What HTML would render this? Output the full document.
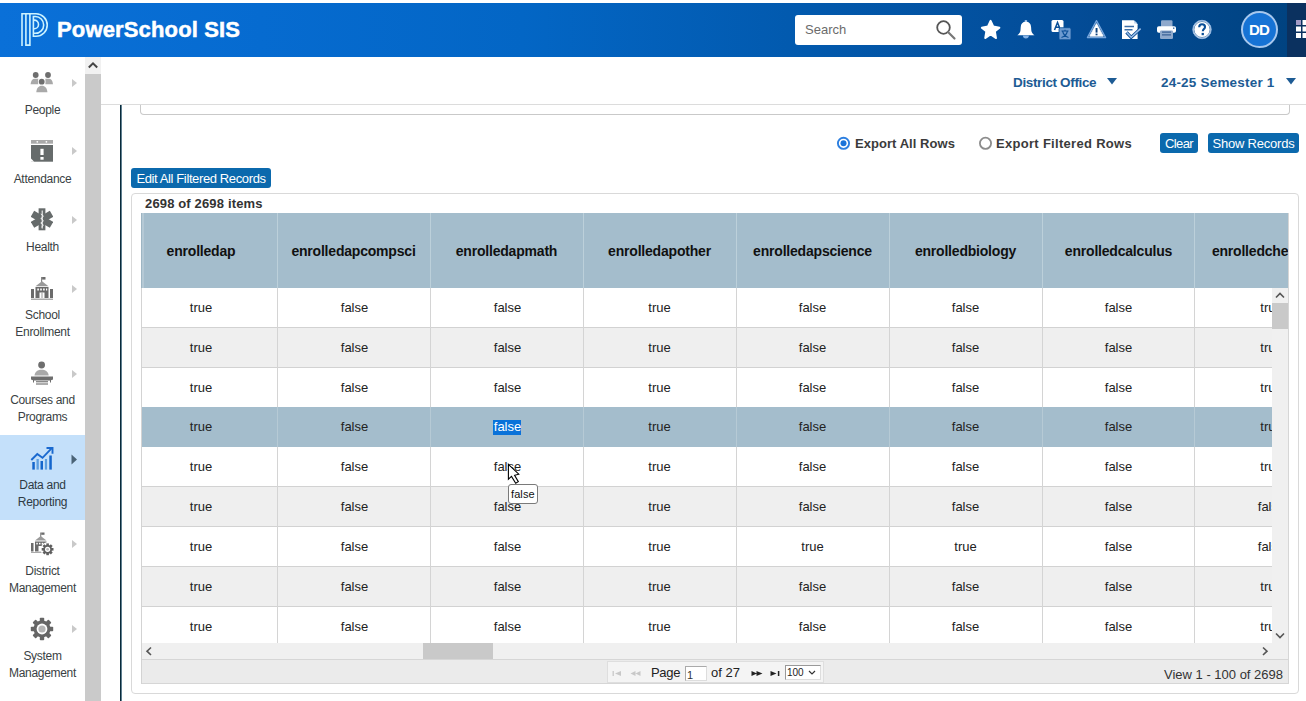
<!DOCTYPE html>
<html><head><meta charset="utf-8">
<style>
*{box-sizing:border-box;margin:0;padding:0}
html,body{width:1306px;height:701px;overflow:hidden;background:#fff;font-family:"Liberation Sans",sans-serif;color:#333}
.a{position:absolute}
.t{position:absolute;white-space:nowrap}
#hdr{left:0;top:3px;width:1306px;height:54px;background:linear-gradient(90deg,#0a70d8 0%,#066bd0 20%,#0366c5 40%,#0259ad 62%,#034c97 82%,#00427f 100%)}
#hdrR{left:1287px;top:3px;width:19px;height:54px;background:#0b315f}
.nav{left:0;width:85px;text-align:center;font-size:12px;letter-spacing:-0.3px;color:#3a3f44;line-height:17px}
.chev{width:0;height:0;border-top:4.5px solid transparent;border-bottom:4.5px solid transparent;border-left:5px solid #c9c9c9}
.btn{background:#0b69ad;color:#fff;border-radius:3px;font-size:13px;text-align:center;padding-top:1px}
.col{top:213px;height:430px;border-right:1px solid #d4d4d4}
.hd{font-size:14px;font-weight:bold;color:#111;text-align:center;line-height:16px;letter-spacing:-0.2px}
.cell{font-size:13px;color:#222;text-align:center;line-height:16px}
</style></head><body>
<!-- header -->
<div id="hdr" class="a"></div>
<div id="hdrR" class="a"></div>
<svg class="a" style="left:15px;top:8px" width="40" height="42" viewBox="15 8 40 42">
  <g fill="none" stroke="#cdf3ff" stroke-width="1.6" stroke-linejoin="miter">
    <path d="M22 46 V13.8 H36 A11.25 11.25 0 0 1 36 36.3 H33.4 V16.5 H35.3 A8.4 8.4 0 0 1 35.3 33.3 H33.4"/>
    <path d="M25.9 13.8 V45.1 H29.9 V13.8"/>
    <path d="M33.4 20.1 H34.2 A4.3 4.3 0 0 1 34.2 28.7 H33.4"/>
  </g>
</svg>
<div class="t" style="left:57px;top:19px;font-size:22px;line-height:22px;font-weight:bold;color:#fff;letter-spacing:0.15px;-webkit-text-stroke:0.5px #fff">PowerSchool SIS</div>

<div class="a" style="left:795px;top:15px;width:167px;height:30px;background:#fff;border-radius:3px"></div>
<div class="t" style="left:805px;top:22px;font-size:13px;line-height:16px;color:#6b6b6b">Search</div>
<svg class="a" style="left:935px;top:19px" width="22" height="22" viewBox="0 0 22 22">
  <circle cx="8.5" cy="8.5" r="6.3" fill="none" stroke="#555" stroke-width="1.8"/>
  <line x1="13" y1="13" x2="19.5" y2="19.5" stroke="#777" stroke-width="2.2" stroke-linecap="round"/>
</svg>

<!-- header icons -->
<svg class="a" style="left:976px;top:16px" width="30" height="28" viewBox="976 16 30 28"><path d="M990.60 20.70 L993.30 26.28 L999.44 27.73 L994.97 31.42 L996.07 38.12 L990.60 34.60 L985.13 38.12 L986.23 31.42 L981.76 27.73 L987.90 26.28 Z" fill="#fff" stroke="#fff" stroke-width="1.8" stroke-linejoin="round"/></svg>
<svg class="a" style="left:1014px;top:17px" width="24" height="24" viewBox="1014 17 24 24">
  <ellipse cx="1025.9" cy="21.1" rx="1.4" ry="1.2" fill="#a3c6ee"/>
  <path d="M1025.9 21.8 C1022.6 21.8 1020.9 23.8 1020.7 27.2 L1020.5 30.3 C1020.3 32.4 1019.2 33.8 1017.3 35.3 H1034.5 C1032.6 33.8 1031.5 32.4 1031.3 30.3 L1031.1 27.2 C1030.9 23.8 1029.2 21.8 1025.9 21.8 Z" fill="#fff"/>
  <path d="M1022.9 35.6 H1028.9 C1028.9 37.4 1027.7 38.5 1025.9 38.5 C1024.1 38.5 1022.9 37.4 1022.9 35.6 Z" fill="#86b3e6"/>
</svg>
<svg class="a" style="left:1050px;top:19px" width="22" height="22" viewBox="0 0 22 22">
  <rect x="1.5" y="1" width="12" height="12" rx="1.5" fill="#fff"/>
  <path d="M4.5 11 L7.5 3.5 L10.5 11 M5.7 8.3 H9.3" stroke="#0a4f97" stroke-width="1.5" fill="none"/>
  <rect x="9" y="8.7" width="12" height="12" rx="1.5" fill="#6c9ad0" stroke="#0a4f97" stroke-width="0.8"/>
  <path d="M11.5 12 H18.5 M15 10.8 V12 M12.5 12 C13.5 16 15.5 17.5 18.5 18.5 M17.5 12 C16.5 16 14.5 17.5 11.5 18.5" stroke="#0a4f97" stroke-width="1.1" fill="none"/>
</svg>
<svg class="a" style="left:1084px;top:17px" width="26" height="25" viewBox="1084 17 26 25">
  <path d="M1096.5 20.6 L1105.6 37.6 H1087.4 Z" fill="none" stroke="#78a6dc" stroke-width="1.3" stroke-linejoin="round"/>
  <path d="M1096.5 23.6 L1103.3 36.2 H1089.7 Z" fill="#fff" stroke="#fff" stroke-width="0.8" stroke-linejoin="round"/>
  <rect x="1095.6" y="28" width="1.9" height="4.6" fill="#0a3f7a"/>
  <rect x="1095.6" y="33.6" width="1.9" height="1.7" fill="#0a3f7a"/>
</svg>
<svg class="a" style="left:1120px;top:18px" width="24" height="23" viewBox="1120 18 24 23">
  <path d="M1122 20.2 H1133.6 L1137.6 24.2 V39 H1122 Z" fill="#fff"/>
  <path d="M1134.2 20.2 L1137.6 23.6 H1134.2 Z" fill="#bcd3ee"/>
  <path d="M1124.5 26.5 H1134 M1124.5 29.8 H1132.5" stroke="#3d6ea6" stroke-width="1.5"/>
  <path d="M1126.5 32.3 L1131.2 37.3 L1140.6 28.6" stroke="#0a4a90" stroke-width="3.2" fill="none"/>
  <path d="M1126.5 32.3 L1131.2 37.3 L1140.6 28.6" stroke="#9ec1ea" stroke-width="1.5" fill="none"/>
</svg>
<svg class="a" style="left:1155px;top:18px" width="24" height="23" viewBox="1155 18 24 23">
  <rect x="1161" y="20.2" width="11.5" height="7" rx="1.2" fill="#8fa9cc"/>
  <rect x="1157" y="26.2" width="19" height="6.6" rx="1.8" fill="#fff"/>
  <rect x="1173" y="27.6" width="1.4" height="1.1" fill="#0a4a90"/>
  <rect x="1160" y="30.4" width="13" height="8.6" rx="1.2" fill="#8fa9cc"/>
  <path d="M1162 32.2 H1171 M1162 34.8 H1171" stroke="#3d6397" stroke-width="1.2"/>
</svg>
<svg class="a" style="left:1191px;top:19px" width="22" height="22" viewBox="0 0 22 22">
  <circle cx="11" cy="10.5" r="9.2" fill="#fff" stroke="#8fb4e0" stroke-width="1"/>
  <circle cx="11" cy="10.5" r="8" fill="#fff" stroke="#0a4f97" stroke-width="0.6"/>
  <path d="M8.2 8.2 C8.2 6.2 9.5 5.2 11 5.2 C12.8 5.2 14 6.2 14 7.9 C14 10 11.8 10.2 11.8 12.3" stroke="#0a4f97" stroke-width="2.1" fill="none"/>
  <rect x="10.6" y="13.9" width="2.3" height="2.3" fill="#0a4f97"/>
</svg>
<div class="a" style="left:1241px;top:11px;width:37px;height:37px;border-radius:50%;background:#1673d5;border:2px solid #a7c8ee"></div>
<div class="t" style="left:1241px;top:21px;width:37px;text-align:center;font-size:15px;line-height:17px;font-weight:bold;color:#fff;letter-spacing:-0.8px;text-indent:-0.8px">DD</div>
<svg class="a" style="left:1296px;top:20px" width="10" height="19" viewBox="0 0 10 19">
  <rect x="0" y="0" width="5" height="5" fill="#a39ac4"/>
  <rect x="6.5" y="0" width="5" height="5" fill="#fff"/>
  <rect x="0" y="6.5" width="5" height="5" fill="#fff"/>
  <rect x="6.5" y="6.5" width="5" height="5" fill="#fff"/>
  <rect x="0" y="13" width="5" height="5" fill="#fff"/>
  <rect x="6.5" y="13" width="5" height="5" fill="#fff"/>
</svg>

<!-- sub header -->
<div class="a" style="left:101px;top:104px;width:1205px;height:1px;background:#dcdcdc"></div>
<div class="t" style="left:1013px;top:75px;font-size:13.5px;line-height:16px;font-weight:bold;color:#1d5b94;letter-spacing:-0.35px">District Office</div>
<svg class="a" style="left:1107px;top:78px" width="10" height="7" viewBox="0 0 10 7"><path d="M0 0 H10 L5 6.5 Z" fill="#1d5b94"/></svg>
<div class="t" style="left:1161px;top:75px;font-size:13.5px;line-height:16px;font-weight:bold;color:#1d5b94;letter-spacing:0.2px">24-25 Semester 1</div>
<svg class="a" style="left:1286px;top:78px" width="10" height="7" viewBox="0 0 10 7"><path d="M0 0 H10 L5 6.5 Z" fill="#1d5b94"/></svg>

<!-- left teal line and top box -->
<div class="a" style="left:120px;top:105px;width:1px;height:596px;background:#082a3a"></div><div class="a" style="left:121px;top:105px;width:1px;height:596px;background:#5f7f90"></div>
<div class="a" style="left:140px;top:104px;width:1150px;height:11px;border:1px solid #c9c9c9;border-top:none;border-radius:0 0 4px 4px"></div>
<div class="a" style="left:101px;top:104px;width:1205px;height:1px;background:#dcdcdc"></div>



<!-- export row -->
<svg class="a" style="left:836px;top:136px" width="15" height="15" viewBox="0 0 15 15"><circle cx="7.5" cy="7.3" r="5.6" fill="#fff" stroke="#2c7fe0" stroke-width="1.9"/><circle cx="7.5" cy="7.3" r="3" fill="#1a73d9"/></svg>
<div class="t" style="left:855px;top:136px;font-size:13px;line-height:16px;font-weight:bold;color:#3b3b3b;letter-spacing:0.05px">Export All Rows</div>
<svg class="a" style="left:978px;top:136px" width="15" height="15" viewBox="0 0 15 15"><circle cx="7.5" cy="7.3" r="5.6" fill="#fff" stroke="#8c8c8c" stroke-width="1.8"/></svg>
<div class="t" style="left:996px;top:136px;font-size:13px;line-height:16px;font-weight:bold;color:#3b3b3b;letter-spacing:0.3px">Export Filtered Rows</div>
<div class="a btn" style="left:1160px;top:133px;width:38px;height:20px;line-height:20px;letter-spacing:-0.6px">Clear</div>
<div class="a btn" style="left:1208px;top:133px;width:91px;height:20px;line-height:20px;letter-spacing:-0.2px">Show Records</div>

<div class="a btn" style="left:131px;top:168px;width:140px;height:20px;line-height:20px;letter-spacing:-0.38px">Edit All Filtered Records</div>

<!-- grid box -->
<div class="a" style="left:131px;top:193px;width:1168px;height:501px;border:1px solid #d9d9d9;border-radius:4px;background:#fff"></div>
<div class="t" style="left:145px;top:196px;font-size:13px;line-height:16px;font-weight:bold;color:#333;letter-spacing:0.15px">2698 of 2698 items</div>
<div class="a" style="left:141px;top:213px;width:1148px;height:471px;overflow:hidden;border-left:1px solid #d3d3d3;border-right:1px solid #d6d6d6">
<div class="a" style="left:0;top:0;width:1148px;height:75px;background:#a4bdcc"></div>
<div class="a" style="left:0;top:75px;width:1148px;height:40px;background:#fff;border-bottom:1px solid #d2d2d2"></div>
<div class="a" style="left:0;top:115px;width:1148px;height:40px;background:#efefef;border-bottom:1px solid #d2d2d2"></div>
<div class="a" style="left:0;top:155px;width:1148px;height:40px;background:#fff;border-bottom:1px solid #d2d2d2"></div>
<div class="a" style="left:0;top:194px;width:1148px;height:40px;background:#a4bdcc;border-bottom:none"></div>
<div class="a" style="left:0;top:234px;width:1148px;height:40px;background:#fff;border-bottom:1px solid #d2d2d2"></div>
<div class="a" style="left:0;top:274px;width:1148px;height:40px;background:#efefef;border-bottom:1px solid #d2d2d2"></div>
<div class="a" style="left:0;top:314px;width:1148px;height:40px;background:#fff;border-bottom:1px solid #d2d2d2"></div>
<div class="a" style="left:0;top:354px;width:1148px;height:40px;background:#efefef;border-bottom:1px solid #d2d2d2"></div>
<div class="a" style="left:0;top:394px;width:1148px;height:40px;background:#fff;border-bottom:1px solid #d2d2d2"></div>
<div class="a" style="left:135px;top:0;width:1px;height:75px;background:#bcd0da"></div>
<div class="a" style="left:135px;top:75px;width:1px;height:355px;background:#d4d4d4"></div>
<div class="a" style="left:288px;top:0;width:1px;height:75px;background:#bcd0da"></div>
<div class="a" style="left:288px;top:75px;width:1px;height:355px;background:#d4d4d4"></div>
<div class="a" style="left:441px;top:0;width:1px;height:75px;background:#bcd0da"></div>
<div class="a" style="left:441px;top:75px;width:1px;height:355px;background:#d4d4d4"></div>
<div class="a" style="left:594px;top:0;width:1px;height:75px;background:#bcd0da"></div>
<div class="a" style="left:594px;top:75px;width:1px;height:355px;background:#d4d4d4"></div>
<div class="a" style="left:747px;top:0;width:1px;height:75px;background:#bcd0da"></div>
<div class="a" style="left:747px;top:75px;width:1px;height:355px;background:#d4d4d4"></div>
<div class="a" style="left:900px;top:0;width:1px;height:75px;background:#bcd0da"></div>
<div class="a" style="left:900px;top:75px;width:1px;height:355px;background:#d4d4d4"></div>
<div class="a" style="left:1052px;top:0;width:1px;height:75px;background:#bcd0da"></div>
<div class="a" style="left:1052px;top:75px;width:1px;height:355px;background:#d4d4d4"></div>
<div class="t hd" style="left:-9px;top:30px;width:136px">enrolledap</div>
<div class="t hd" style="left:135px;top:30px;width:153px">enrolledapcompsci</div>
<div class="t hd" style="left:288px;top:30px;width:153px">enrolledapmath</div>
<div class="t hd" style="left:441px;top:30px;width:153px">enrolledapother</div>
<div class="t hd" style="left:594px;top:30px;width:153px">enrolledapscience</div>
<div class="t hd" style="left:747px;top:30px;width:153px">enrolledbiology</div>
<div class="t hd" style="left:900px;top:30px;width:153px">enrolledcalculus</div>
<div class="t hd" style="left:1052px;top:30px;width:153px">enrolledchemistry</div>
<div class="t cell" style="left:-9px;top:87px;width:136px">true</div>
<div class="t cell" style="left:136px;top:87px;width:153px">false</div>
<div class="t cell" style="left:289px;top:87px;width:153px">false</div>
<div class="t cell" style="left:441px;top:87px;width:153px">true</div>
<div class="t cell" style="left:594px;top:87px;width:153px">false</div>
<div class="t cell" style="left:747px;top:87px;width:153px">false</div>
<div class="t cell" style="left:900px;top:87px;width:153px">false</div>
<div class="t cell" style="left:1053px;top:87px;width:153px">true</div>
<div class="t cell" style="left:-9px;top:127px;width:136px">true</div>
<div class="t cell" style="left:136px;top:127px;width:153px">false</div>
<div class="t cell" style="left:289px;top:127px;width:153px">false</div>
<div class="t cell" style="left:441px;top:127px;width:153px">true</div>
<div class="t cell" style="left:594px;top:127px;width:153px">false</div>
<div class="t cell" style="left:747px;top:127px;width:153px">false</div>
<div class="t cell" style="left:900px;top:127px;width:153px">false</div>
<div class="t cell" style="left:1053px;top:127px;width:153px">true</div>
<div class="t cell" style="left:-9px;top:167px;width:136px">true</div>
<div class="t cell" style="left:136px;top:167px;width:153px">false</div>
<div class="t cell" style="left:289px;top:167px;width:153px">false</div>
<div class="t cell" style="left:441px;top:167px;width:153px">true</div>
<div class="t cell" style="left:594px;top:167px;width:153px">false</div>
<div class="t cell" style="left:747px;top:167px;width:153px">false</div>
<div class="t cell" style="left:900px;top:167px;width:153px">false</div>
<div class="t cell" style="left:1053px;top:167px;width:153px">true</div>
<div class="t cell" style="left:-9px;top:206px;width:136px">true</div>
<div class="t cell" style="left:136px;top:206px;width:153px">false</div>
<div class="a" style="left:135px;top:194px;width:1px;height:40px;background:#b6cad5"></div>
<div class="a" style="left:288px;top:194px;width:1px;height:40px;background:#b6cad5"></div>
<div class="a" style="left:441px;top:194px;width:1px;height:40px;background:#b6cad5"></div>
<div class="a" style="left:594px;top:194px;width:1px;height:40px;background:#b6cad5"></div>
<div class="a" style="left:747px;top:194px;width:1px;height:40px;background:#b6cad5"></div>
<div class="a" style="left:900px;top:194px;width:1px;height:40px;background:#b6cad5"></div>
<div class="a" style="left:1052px;top:194px;width:1px;height:40px;background:#b6cad5"></div>
<div class="a" style="left:351px;top:207px;width:28px;height:14.5px;background:#0a72d9"></div>
<div class="t cell" style="left:289px;top:206px;width:153px;color:#fff">false</div>
<div class="t cell" style="left:441px;top:206px;width:153px">true</div>
<div class="t cell" style="left:594px;top:206px;width:153px">false</div>
<div class="t cell" style="left:747px;top:206px;width:153px">false</div>
<div class="t cell" style="left:900px;top:206px;width:153px">false</div>
<div class="t cell" style="left:1053px;top:206px;width:153px">true</div>
<div class="t cell" style="left:-9px;top:246px;width:136px">true</div>
<div class="t cell" style="left:136px;top:246px;width:153px">false</div>
<div class="t cell" style="left:289px;top:246px;width:153px">false</div>
<div class="t cell" style="left:441px;top:246px;width:153px">true</div>
<div class="t cell" style="left:594px;top:246px;width:153px">false</div>
<div class="t cell" style="left:747px;top:246px;width:153px">false</div>
<div class="t cell" style="left:900px;top:246px;width:153px">false</div>
<div class="t cell" style="left:1053px;top:246px;width:153px">true</div>
<div class="t cell" style="left:-9px;top:286px;width:136px">true</div>
<div class="t cell" style="left:136px;top:286px;width:153px">false</div>
<div class="t cell" style="left:289px;top:286px;width:153px">false</div>
<div class="t cell" style="left:441px;top:286px;width:153px">true</div>
<div class="t cell" style="left:594px;top:286px;width:153px">false</div>
<div class="t cell" style="left:747px;top:286px;width:153px">false</div>
<div class="t cell" style="left:900px;top:286px;width:153px">false</div>
<div class="t cell" style="left:1053px;top:286px;width:153px">false</div>
<div class="t cell" style="left:-9px;top:326px;width:136px">true</div>
<div class="t cell" style="left:136px;top:326px;width:153px">false</div>
<div class="t cell" style="left:289px;top:326px;width:153px">false</div>
<div class="t cell" style="left:441px;top:326px;width:153px">true</div>
<div class="t cell" style="left:594px;top:326px;width:153px">true</div>
<div class="t cell" style="left:747px;top:326px;width:153px">true</div>
<div class="t cell" style="left:900px;top:326px;width:153px">false</div>
<div class="t cell" style="left:1053px;top:326px;width:153px">false</div>
<div class="t cell" style="left:-9px;top:366px;width:136px">true</div>
<div class="t cell" style="left:136px;top:366px;width:153px">false</div>
<div class="t cell" style="left:289px;top:366px;width:153px">false</div>
<div class="t cell" style="left:441px;top:366px;width:153px">true</div>
<div class="t cell" style="left:594px;top:366px;width:153px">false</div>
<div class="t cell" style="left:747px;top:366px;width:153px">false</div>
<div class="t cell" style="left:900px;top:366px;width:153px">false</div>
<div class="t cell" style="left:1053px;top:366px;width:153px">true</div>
<div class="t cell" style="left:-9px;top:406px;width:136px">true</div>
<div class="t cell" style="left:136px;top:406px;width:153px">false</div>
<div class="t cell" style="left:289px;top:406px;width:153px">false</div>
<div class="t cell" style="left:441px;top:406px;width:153px">true</div>
<div class="t cell" style="left:594px;top:406px;width:153px">false</div>
<div class="t cell" style="left:747px;top:406px;width:153px">false</div>
<div class="t cell" style="left:900px;top:406px;width:153px">false</div>
<div class="t cell" style="left:1053px;top:406px;width:153px">true</div>
<div class="a" style="left:1130px;top:75px;width:16px;height:371px;background:#f0f0f0"></div>
<div class="a" style="left:1130px;top:90px;width:16px;height:26px;background:#c9c9c9"></div>
<svg class="a" style="left:1130px;top:75px" width="16" height="15" viewBox="0 0 16 15"><path d="M4 9.5 L8 5.5 L12 9.5" stroke="#555" stroke-width="1.6" fill="none"/></svg>
<svg class="a" style="left:1130px;top:415px" width="16" height="15" viewBox="0 0 16 15"><path d="M4 5.5 L8 9.5 L12 5.5" stroke="#555" stroke-width="1.6" fill="none"/></svg>
<div class="a" style="left:0;top:430px;width:1130px;height:16px;background:#f0f0f0"></div>
<div class="a" style="left:281px;top:430px;width:70px;height:16px;background:#c9c9c9"></div>
<svg class="a" style="left:-1px;top:430px" width="16" height="16" viewBox="0 0 16 16"><path d="M10 4.5 L6 8.2 L10 12" stroke="#555" stroke-width="1.6" fill="none"/></svg>
<svg class="a" style="left:1115px;top:430px" width="16" height="16" viewBox="0 0 16 16"><path d="M6 4.5 L10 8.2 L6 12" stroke="#555" stroke-width="1.6" fill="none"/></svg>
<div class="a" style="left:0;top:446px;width:1148px;height:25px;background:#ebebeb;border-top:1px solid #d6d6d6;border-bottom:1px solid #d6d6d6;border-right:1px solid #d6d6d6"></div>
</div>

<div class="a" style="left:141px;top:213px;width:1px;height:75px;background:#9db5c3"></div>
<div class="a" style="left:142px;top:213px;width:1.5px;height:75px;background:#b5c9d5"></div>
<!-- pager -->
<div class="a" style="left:607px;top:661px;width:217px;height:22px;background:#f4f4f4;border:1px solid #dedede"></div>
<svg class="a" style="left:612px;top:670px" width="10" height="7" viewBox="0 0 10 7"><path d="M1.2 1 V6" stroke="#c8c8c8" stroke-width="1.3"/><path d="M9 1 L3 3.5 L9 6 Z" fill="#c8c8c8"/></svg>
<svg class="a" style="left:630px;top:670px" width="11" height="7" viewBox="0 0 11 7"><path d="M5.5 1 L0.5 3.5 L5.5 6 Z M10.5 1 L5.5 3.5 L10.5 6 Z" fill="#c8c8c8"/></svg>
<div class="t" style="left:651px;top:665px;font-size:13px;line-height:16px;color:#222;letter-spacing:-0.3px">Page</div>
<div class="a" style="left:685px;top:665.5px;width:22px;height:15px;background:#fff;border:1px solid #aaa;border-right-color:#ddd;border-bottom-color:#ddd"></div>
<div class="t" style="left:687px;top:668px;font-size:11px;line-height:14px;color:#333">1</div>
<div class="t" style="left:711px;top:665px;font-size:13px;line-height:16px;color:#222">of 27</div>
<svg class="a" style="left:751px;top:670px" width="12" height="7" viewBox="0 0 12 7"><path d="M0.5 1 L6 3.5 L0.5 6 Z M5.5 1 L11.5 3.5 L5.5 6 Z" fill="#222"/></svg>
<svg class="a" style="left:770px;top:670px" width="10" height="7" viewBox="0 0 10 7"><path d="M0.5 1 L6.5 3.5 L0.5 6 Z" fill="#222"/><path d="M8.6 1 V6" stroke="#222" stroke-width="1.5"/></svg>
<div class="a" style="left:785px;top:664.5px;width:36px;height:15px;background:#fff;border:1px solid #999;border-right-color:#ddd;border-bottom-color:#ddd"></div>
<div class="t" style="left:787px;top:666px;font-size:10px;line-height:14px;color:#222">100</div>
<svg class="a" style="left:808px;top:670px" width="8" height="6" viewBox="0 0 8 6"><path d="M1 1 L4 4 L7 1" stroke="#333" stroke-width="1.2" fill="none"/></svg>
<div class="t" style="left:1164px;top:667px;font-size:13px;line-height:16px;color:#333">View 1 - 100 of 2698</div>

<!-- tooltip + cursor -->
<div class="a" style="left:508px;top:484px;width:30px;height:20px;background:#fff;border:1px solid #7a7a7a;border-radius:3px"></div>
<div class="t" style="left:511px;top:487px;font-size:11px;line-height:14px;color:#111;letter-spacing:0.1px">false</div>
<svg class="a" style="left:504px;top:460px" width="20" height="28" viewBox="504 460 20 28">
  <path d="M508.4 464.3 V479.2 L511.5 476.4 L515.7 483.2 L518.3 481.6 L514.6 475.3 L518.8 474.2 Z" fill="#fff" stroke="#000" stroke-width="1.1" stroke-linejoin="miter"/>
</svg>

<!-- sidebar -->
<div class="a" style="left:0;top:57px;width:85px;height:644px;background:#fff"></div>
<div class="a" style="left:85px;top:57px;width:16px;height:644px;background:#cacaca"></div>
<div class="a" style="left:85px;top:57px;width:16px;height:17px;background:#f1f1f1"></div>
<svg class="a" style="left:85px;top:57px" width="16" height="17" viewBox="0 0 16 17"><path d="M3.8 10.5 L8 6.3 L12.2 10.5" stroke="#444" stroke-width="2" fill="none"/></svg>
<div class="a" style="left:0;top:435px;width:85px;height:85px;background:#c4e0fa"></div>

<!-- People -->
<svg class="a" style="left:29px;top:71px" width="26" height="23" viewBox="29 71 26 23">
  <circle cx="35.7" cy="75" r="2.9" fill="#6e6e6e"/>
  <circle cx="48" cy="75" r="2.9" fill="#6e6e6e"/>
  <path d="M30.6 84.2 C31 80.5 32.5 78.8 34.8 78.8 H38.3 V84.2 Z" fill="#a9a9a9"/>
  <path d="M53 84.2 C52.6 80.5 51.1 78.8 48.8 78.8 H45.4 V84.2 Z" fill="#a9a9a9"/>
  <circle cx="41.7" cy="81.7" r="3.6" fill="#fff"/>
  <circle cx="41.7" cy="81.7" r="2.9" fill="#6e6e6e"/>
  <path d="M36.3 92.2 C36.6 88 38.6 85.7 41.8 85.7 C45 85.7 47.1 88 47.4 92.2 Z" fill="#a9a9a9"/>
</svg>
<div class="a chev" style="left:72px;top:79px"></div>
<div class="t nav" style="top:102px">People</div>

<!-- Attendance -->
<svg class="a" style="left:31px;top:140px" width="22" height="22" viewBox="0 0 22 22">
  <rect x="0" y="0" width="22" height="3.7" fill="#a9a9a9"/>
  <circle cx="6.3" cy="1.85" r="0.9" fill="#fff"/>
  <circle cx="15.4" cy="1.85" r="0.9" fill="#fff"/>
  <rect x="0" y="5" width="22" height="16.7" fill="#666b6b"/>
  <rect x="9.4" y="8.8" width="3.2" height="6.2" fill="#fff"/>
  <rect x="9.4" y="17" width="3.2" height="2.7" fill="#fff"/>
  <path d="M0 18.5 L3.2 21.7 H0 Z" fill="#fff"/>
</svg>
<div class="a chev" style="left:72px;top:147px"></div>
<div class="t nav" style="top:171px">Attendance</div>

<!-- Health -->
<svg class="a" style="left:31px;top:208px" width="22" height="23" viewBox="0 0 22 23">
  <g fill="#666b6b">
    <rect x="7.6" y="0.3" width="6.8" height="22" />
    <rect x="7.6" y="0.3" width="6.8" height="22" transform="rotate(60 11 11.3)"/>
    <rect x="7.6" y="0.3" width="6.8" height="22" transform="rotate(-60 11 11.3)"/>
  </g>
  <path d="M11.2 2.5 V20.5 M9.8 6 C12.8 7.5 12.8 9 9.8 10.5 C12.8 12 12.8 13.5 9.8 15 C12.8 16.5 12.5 18 10.5 19" stroke="#fff" stroke-width="1" fill="none"/>
</svg>
<div class="a chev" style="left:72px;top:216px"></div>
<div class="t nav" style="top:239px">Health</div>

<!-- School Enrollment -->
<svg class="a" style="left:31px;top:277px" width="22" height="23" viewBox="0 0 22 23">
  <g fill="#6b6b6b">
    <rect x="10.2" y="0" width="0.9" height="5"/>
    <path d="M11.1 0 H14.5 V2.6 H11.1 Z" />
    <path d="M4.5 9.2 L11 4.3 L17.5 9.2 Z" fill="#9a9a9a"/>
    <rect x="4.5" y="10" width="13" height="11"/>
    <rect x="0" y="12" width="3" height="9"/>
    <rect x="19" y="12" width="3" height="9"/>
    <rect x="0" y="21.6" width="22" height="1.2" fill="#9a9a9a"/>
  </g>
  <g fill="#fff">
    <rect x="6.3" y="11.5" width="1.6" height="2"/><rect x="9.2" y="11.5" width="1.6" height="2"/><rect x="12.1" y="11.5" width="1.6" height="2"/><rect x="15" y="11.5" width="1.2" height="2"/>
    <rect x="8.5" y="15.5" width="5" height="5.5"/>
  </g>
  <rect x="10.5" y="15.5" width="1" height="5.5" fill="#9a9a9a"/>
</svg>
<div class="a chev" style="left:72px;top:285px"></div>
<div class="t nav" style="top:307px">School<br>Enrollment</div>

<!-- Courses -->
<svg class="a" style="left:31px;top:361px" width="22" height="24" viewBox="0 0 22 24">
  <circle cx="10.6" cy="4" r="3.4" fill="#6e6e6e"/>
  <path d="M3.5 14.5 C4 10.5 7 8.8 10.6 8.8 C14.2 8.8 17.2 10.5 17.7 14.5 Z" fill="#a9a9a9"/>
  <path d="M0 15.5 H22 V18.5 L20 19.2 V21.5 H19 V19.5 H3 V21.5 H2 V19.2 L0 18.5 Z" fill="#6e6e6e"/>
  <rect x="5" y="20" width="12" height="1.4" fill="#8a8a8a"/>
  <rect x="5" y="22.3" width="12" height="1.4" fill="#8a8a8a"/>
</svg>
<div class="a chev" style="left:72px;top:370px"></div>
<div class="t nav" style="top:392px">Courses and<br>Programs</div>

<!-- Data and Reporting -->
<svg class="a" style="left:25px;top:440px" width="35" height="35" viewBox="25 440 35 35">
  <rect x="32.3" y="462" width="2.5" height="7.6" fill="#1466cc"/>
  <rect x="36.5" y="459" width="2.3" height="10.6" fill="#5d9fe0"/>
  <rect x="40.5" y="461" width="2.5" height="8.6" fill="#1466cc"/>
  <rect x="44.9" y="459" width="2.2" height="10.6" fill="#5d9fe0"/>
  <rect x="49.3" y="455.5" width="2.5" height="14.1" fill="#1466cc"/>
  <path d="M31.3 460 L37.3 454 L42.5 457.8 L51.8 448.2" stroke="#1a69cf" stroke-width="1.9" fill="none"/>
  <path d="M46.5 448 H52.5 V453.8" stroke="#1a69cf" stroke-width="1.9" fill="none"/>
</svg>
<svg class="a" style="left:71px;top:454px" width="7" height="11" viewBox="0 0 7 11"><path d="M0.5 0.5 L6 5.5 L0.5 10.5 Z" fill="#4a6376"/></svg>
<div class="t nav" style="top:477px;color:#2e3a44">Data and<br>Reporting</div>

<!-- District Management -->
<svg class="a" style="left:31px;top:532px" width="24" height="24" viewBox="0 0 24 24">
  <g fill="#6b6b6b">
    <rect x="9.3" y="0.5" width="0.9" height="4.5"/>
    <path d="M10.2 0.5 H13.5 V2.8 H10.2 Z"/>
    <path d="M4 8.5 L9.7 4 L15.5 8.5 Z" fill="#9a9a9a"/>
    <rect x="4" y="9.5" width="11.5" height="10"/>
    <rect x="0" y="11" width="2.5" height="8.5"/>
    <rect x="0" y="20" width="14" height="1" fill="#aaa"/>
  </g>
  <g fill="#fff"><rect x="5.3" y="10.8" width="1.5" height="1.6"/><rect x="8" y="10.8" width="1.5" height="1.6"/><rect x="10.7" y="10.8" width="1.5" height="1.6"/><rect x="7.5" y="14" width="3" height="5.5"/></g>
  <g transform="translate(16.6 17.3)">
    <circle r="7" fill="#fff"/>
    <g fill="#5f5f5f">
      <rect x="-1.3" y="-5.9" width="2.6" height="11.8"/>
      <rect x="-1.3" y="-5.9" width="2.6" height="11.8" transform="rotate(45)"/>
      <rect x="-1.3" y="-5.9" width="2.6" height="11.8" transform="rotate(90)"/>
      <rect x="-1.3" y="-5.9" width="2.6" height="11.8" transform="rotate(135)"/>
      <circle r="4.4"/>
    </g>
    <circle r="2.6" fill="#fff"/>
    <circle r="1.4" fill="#bbb"/>
  </g>
</svg>
<div class="a chev" style="left:72px;top:540px"></div>
<div class="t nav" style="top:563px">District<br>Management</div>

<!-- System Management -->
<svg class="a" style="left:30px;top:617px" width="24" height="24" viewBox="-12 -12 24 24">
  <g fill="#666">
    <rect x="-2.2" y="-11.2" width="4.4" height="22.4" rx="0.8"/>
    <rect x="-2.2" y="-11.2" width="4.4" height="22.4" rx="0.8" transform="rotate(45)"/>
    <rect x="-2.2" y="-11.2" width="4.4" height="22.4" rx="0.8" transform="rotate(90)"/>
    <rect x="-2.2" y="-11.2" width="4.4" height="22.4" rx="0.8" transform="rotate(135)"/>
    <circle r="8.5"/>
  </g>
  <circle r="5.4" fill="#fff"/>
  <circle r="3.6" fill="#b5b5b5"/>
</svg>
<div class="a chev" style="left:72px;top:625px"></div>
<div class="t nav" style="top:648px">System<br>Management</div>

</body></html>
